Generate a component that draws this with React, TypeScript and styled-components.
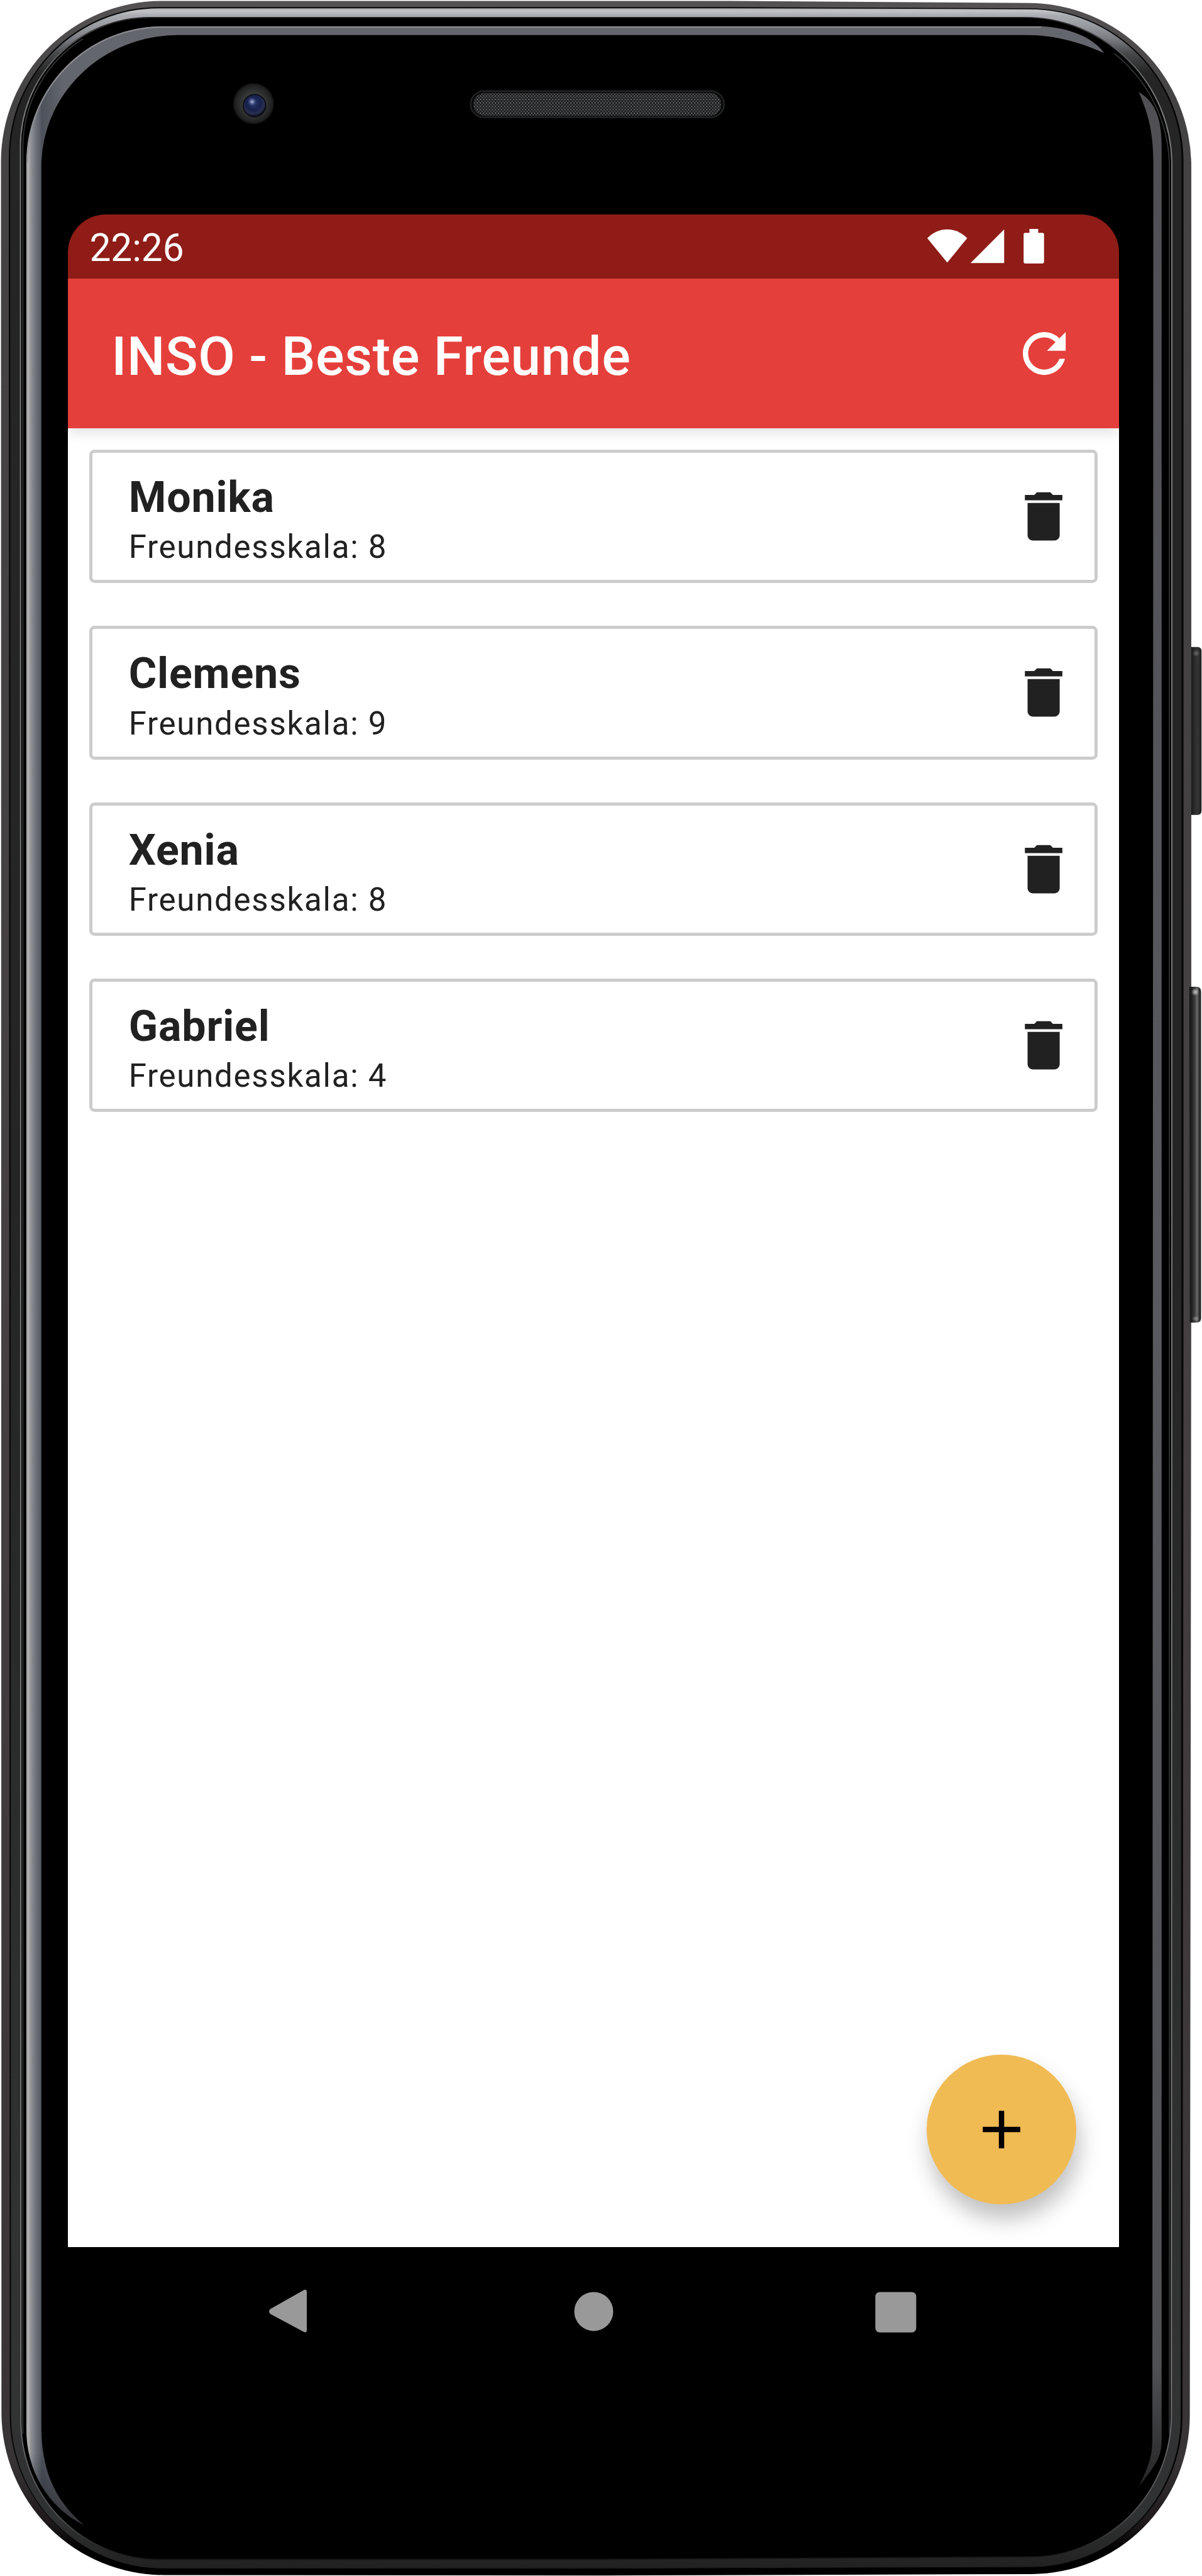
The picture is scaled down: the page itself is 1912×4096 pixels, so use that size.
import React from "react";
import styled, { createGlobalStyle } from "styled-components";

/* Device units to CSS pixels: the handset artwork is drawn on a 2470 x 5292 grid. */
const SCALE = 1912 / 2470;
const u = (n: number) => `${(n * SCALE).toFixed(3)}px`;

const GlobalStyle = createGlobalStyle`
  html, body { margin: 0; padding: 0; background: #fff; }
  body { font-family: Roboto, "Noto Sans", sans-serif; overflow: hidden; }
  *, *::before, *::after { box-sizing: border-box; }
  button { border: 0; padding: 0; background: none; font: inherit; color: inherit; }
`;

const Device = styled.div`
  position: relative;
  width: 1912px;
  height: 4096px;
  padding: ${u(440)} 0 0 ${u(140)};
  overflow: hidden;
`;

const Casing = styled.svg`
  position: absolute;
  inset: 0;
  width: 100%;
  height: 100%;
`;

const Screen = styled.div`
  position: relative;
  display: flex;
  flex-direction: column;
  width: ${u(2160)};
  height: ${u(4440)};
  border-radius: ${u(78)} ${u(78)} 0 0;
  overflow: hidden;
  background: #000;
`;

const StatusBar = styled.div`
  display: flex;
  flex: none;
  align-items: center;
  justify-content: space-between;
  height: ${u(132)};
  padding: 0 ${u(154)} 0 ${u(44)};
  background: #8f1c17;
  color: #fff;
`;

const Clock = styled.span`
  padding-top: ${u(7)};
  font-size: ${u(78)};
  line-height: ${u(100)};
`;

const StatusIcons = styled.svg`
  width: ${u(240)};
  height: ${u(72)};
  fill: #fff;
`;

const AppBar = styled.header`
  position: relative;
  z-index: 1;
  display: flex;
  flex: none;
  align-items: center;
  justify-content: space-between;
  height: ${u(308)};
  padding: 0 ${u(88)};
  background: #e53f3b;
  color: #fff;
  box-shadow: 0 ${u(10)} ${u(26)} rgba(0, 0, 0, 0.12);
`;

const Title = styled.h1`
  margin: 0;
  padding: ${u(13)} 0 0 ${u(1)};
  font-size: ${u(110)};
  font-weight: 500;
  line-height: ${u(140)};
  letter-spacing: ${u(0.83)};
`;

const Icon = styled.svg`
  display: block;
  width: ${u(132)};
  height: ${u(132)};
  fill: currentColor;
`;

const Content = styled.main`
  position: relative;
  flex: 1;
  padding: ${u(44)};
  background: #fff;
`;

const FriendList = styled.ul`
  display: flex;
  flex-direction: column;
  gap: ${u(88)};
  margin: 0;
  padding: 0;
  list-style: none;
`;

const FriendCard = styled.li`
  display: flex;
  align-items: center;
  justify-content: space-between;
  height: ${u(274)};
  padding: 0 ${u(39)} 0 ${u(74)};
  border: ${u(6.5)} solid #ccc;
  border-radius: ${u(11)};
  color: #212121;
`;

const FriendText = styled.div`
  display: flex;
  flex-direction: column;
  padding-top: ${u(16)};
`;

const FriendName = styled.strong`
  font-size: ${u(88)};
  font-weight: 700;
  line-height: ${u(110)};
  letter-spacing: ${u(1.1)};
`;

const FriendScale = styled.span`
  font-size: ${u(66)};
  line-height: ${u(92)};
  letter-spacing: ${u(2.2)};
`;

const AddButton = styled.button`
  position: absolute;
  right: ${u(88)};
  bottom: ${u(88)};
  display: grid;
  place-items: center;
  width: ${u(308)};
  height: ${u(308)};
  border-radius: 50%;
  background: #f1bb54;
  color: #000;
  box-shadow: ${u(6)} ${u(30)} ${u(46)} rgba(0, 0, 0, 0.25);
`;

const NavBar = styled.nav`
  display: flex;
  flex: none;
  align-items: center;
  justify-content: space-between;
  height: ${u(264)};
  padding: 0 ${u(397)};
  background: #000;
`;

const NavIcon = styled.svg`
  width: ${u(120)};
  height: ${u(120)};
  fill: #999;
`;

const friends = [
  { name: "Monika", scale: 8 },
  { name: "Clemens", scale: 9 },
  { name: "Xenia", scale: 8 },
  { name: "Gabriel", scale: 4 },
];

function PhoneCasing() {
  return (
    <Casing viewBox="0 0 2470 5292" preserveAspectRatio="none" aria-hidden="true">
      <defs>
        <linearGradient id="rim" x1="0" y1="0" x2="0" y2="5292" gradientUnits="userSpaceOnUse">
          <stop offset="0" stopColor="#545253" />
          <stop offset="0.04" stopColor="#454243" />
          <stop offset="0.5" stopColor="#454142" />
          <stop offset="0.955" stopColor="#383435" />
          <stop offset="0.98" stopColor="#1d191b" />
          <stop offset="0.99" stopColor="#000" />
        </linearGradient>
        <linearGradient id="metal" x1="0" y1="14" x2="0" y2="150" gradientUnits="userSpaceOnUse">
          <stop offset="0" stopColor="#98999c" />
          <stop offset="0.06" stopColor="#c3c4c8" />
          <stop offset="0.13" stopColor="#a9acb0" />
          <stop offset="0.3" stopColor="#96999d" />
          <stop offset="0.5" stopColor="#77797e" />
          <stop offset="0.7" stopColor="#48494b" />
          <stop offset="1" stopColor="#252525" />
        </linearGradient>
        <linearGradient id="metalLow" x1="0" y1="2600" x2="0" y2="5276" gradientUnits="userSpaceOnUse">
          <stop offset="0" stopColor="#323333" stopOpacity="0" />
          <stop offset="0.85" stopColor="#323333" />
          <stop offset="0.96" stopColor="#303132" />
          <stop offset="1" stopColor="#212121" />
        </linearGradient>
        <linearGradient id="edge" x1="0" y1="36" x2="0" y2="5258" gradientUnits="userSpaceOnUse">
          <stop offset="0" stopColor="#222" />
          <stop offset="0.012" stopColor="#55575a" />
          <stop offset="0.03" stopColor="#7a7b7c" />
          <stop offset="0.93" stopColor="#777879" />
          <stop offset="0.985" stopColor="#4a4b4c" />
          <stop offset="1" stopColor="#161616" />
        </linearGradient>
        <linearGradient id="glassLeft" x1="54" y1="0" x2="130" y2="0" gradientUnits="userSpaceOnUse">
          <stop offset="0" stopColor="#959697" />
          <stop offset="0.05" stopColor="#b1b2b3" />
          <stop offset="0.13" stopColor="#8e9194" />
          <stop offset="0.25" stopColor="#70747b" />
          <stop offset="0.36" stopColor="#5b606a" />
          <stop offset="0.42" stopColor="#4d515b" />
          <stop offset="0.7" stopColor="#575c63" />
          <stop offset="1" stopColor="#64666d" />
        </linearGradient>
        <linearGradient id="glassTip" x1="0" y1="5040" x2="0" y2="5190" gradientUnits="userSpaceOnUse">
          <stop offset="0" stopColor="#202126" stopOpacity="0" />
          <stop offset="1" stopColor="#202126" stopOpacity="0.8" />
        </linearGradient>
        <linearGradient id="glassRight" x1="0" y1="189" x2="0" y2="5109" gradientUnits="userSpaceOnUse">
          <stop offset="0" stopColor="#4f4f54" />
          <stop offset="0.5" stopColor="#595a5f" />
          <stop offset="0.95" stopColor="#505155" />
          <stop offset="1" stopColor="#252527" />
        </linearGradient>
        <linearGradient id="power" x1="2446" y1="0" x2="2469" y2="0" gradientUnits="userSpaceOnUse">
          <stop offset="0" stopColor="#131313" />
          <stop offset="0.35" stopColor="#2a2a2a" />
          <stop offset="0.65" stopColor="#353535" />
          <stop offset="0.9" stopColor="#252525" />
          <stop offset="1" stopColor="#111" />
        </linearGradient>
        <linearGradient id="volume" x1="2444" y1="0" x2="2468" y2="0" gradientUnits="userSpaceOnUse">
          <stop offset="0" stopColor="#131313" />
          <stop offset="0.3" stopColor="#292929" />
          <stop offset="0.55" stopColor="#4a4a4a" />
          <stop offset="0.65" stopColor="#6a6a6a" />
          <stop offset="0.82" stopColor="#3c3c3c" />
          <stop offset="1" stopColor="#0d0d0d" />
        </linearGradient>
        <radialGradient id="keyGlow">
          <stop offset="0" stopColor="#fff" stopOpacity="0.7" />
          <stop offset="1" stopColor="#fff" stopOpacity="0" />
        </radialGradient>
        <radialGradient id="lens" cx="0.45" cy="0.38" r="0.6">
          <stop offset="0" stopColor="#2a3970" />
          <stop offset="0.55" stopColor="#16204a" />
          <stop offset="0.8" stopColor="#2b3050" />
          <stop offset="1" stopColor="#0c0e1c" />
        </radialGradient>
        <radialGradient id="glint">
          <stop offset="0" stopColor="#b9c1dd" />
          <stop offset="1" stopColor="#4b5a90" stopOpacity="0" />
        </radialGradient>
        <radialGradient id="bezel">
          <stop offset="0.5" stopColor="#383a3a" />
          <stop offset="0.9" stopColor="#1f2020" />
          <stop offset="1" stopColor="#101010" />
        </radialGradient>
        <pattern id="mesh" width="6.2" height="7" patternUnits="userSpaceOnUse">
          <rect width="6.2" height="7" fill="#171819" />
          <rect x="0" y="0" width="2.8" height="2.8" fill="#6c6e6e" />
          <rect x="3.1" y="3.5" width="2.8" height="2.8" fill="#575959" />
        </pattern>
      </defs>

      <path fill="url(#power)" d="M2444 1329h17q8 0 8 9v327q0 9-8 9h-17z" />
      <ellipse cx="2458" cy="1342" rx="8" ry="7" fill="url(#keyGlow)" opacity="0.4" />
      <path
        fill="url(#rim)"
        d="M2 332A330 330 0 0 1 332 2H1500L2112 6A336 336 0 0 1 2448 342V2600L2445 4962A326 326 0 0 1 2119 5288L1235 5291L337 5290A334 334 0 0 1 3 4956z"
      />
      <path
        fill="#070707"
        d="M18 322A308 308 0 0 1 326 14.500H1500L2116 17A316 316 0 0 1 2432 336V2600L2430 4964A312 312 0 0 1 2118 5275L1235 5278L336 5277A316 316 0 0 1 20 4960z"
      />
      <path
        fill="url(#metal)"
        d="M21 322A305 305 0 0 1 326 17H1500L2116 19A312 312 0 0 1 2428 336V2600L2426 4964A308 308 0 0 1 2118 5273L1235 5276L336 5276A313 313 0 0 1 23 4960z"
      />
      <path
        fill="url(#metalLow)"
        d="M21 2600V322H2428V2600L2426 4964A308 308 0 0 1 2118 5273L1235 5276L336 5276A313 313 0 0 1 23 4960z"
      />
      <path
        fill="#000"
        stroke="url(#edge)"
        strokeWidth="2.500"
        d="M42 301A265 265 0 0 1 307 36H2106A302 302 0 0 1 2408 338V2600L2407 4963A290 290 0 0 1 2117 5253L1235 5258H326A283 283 0 0 1 43 4976z"
      />
      <path
        fill="none"
        stroke="#3a3b3c"
        strokeWidth="2"
        d="M47 5000V305A264 264 0 0 1 170 80M2290 110A300 300 0 0 1 2403 340V5000"
      />
      <path
        fill="url(#glassLeft)"
        d="M172 5187C98 5150 54 5075 54 4990V334A280 280 0 0 1 334 54H2139C2190 56 2244 74 2269 109C2222 88 2170 72 2110 72H366A281 270 0 0 0 85 340V4990C86 5065 106 5132 172 5187z"
      />
      <path
        fill="url(#glassTip)"
        d="M172 5187C98 5150 54 5075 54 4990H85C86 5065 106 5132 172 5187z"
      />
      <path fill="none" stroke="#8d8f93" strokeWidth="2.500" d="M56 334A278 278 0 0 1 334 55.500H2139" />
      <path
        fill="url(#glassRight)"
        d="M2340 189C2375 210 2387 245 2387 300V5010C2387 5050 2375 5062 2340 5109C2358 5070 2368 5050 2368 5010L2370 340C2370 275 2362 240 2340 189z"
      />
      <path fill="url(#volume)" d="M2444 2027h15q9 0 9 10v671q0 9-9 9h-14z" />
      <ellipse cx="2456" cy="2038" rx="8" ry="8" fill="url(#keyGlow)" />
      <ellipse cx="2457" cy="2709" rx="8" ry="6" fill="url(#keyGlow)" opacity="0.5" />

      <circle cx="521" cy="213" r="42" fill="url(#bezel)" />
      <circle cx="523" cy="217" r="23" fill="url(#lens)" stroke="#090a10" strokeWidth="2" />
      <circle cx="518" cy="209" r="9" fill="url(#glint)" />

      <rect x="967" y="187" width="521" height="54" rx="27" fill="#0a0a0b" stroke="#222324" strokeWidth="3" />
      <rect x="973" y="191" width="509" height="47" rx="23" fill="url(#mesh)" />
    </Casing>
  );
}

export default function App() {
  return (
    <>
      <GlobalStyle />
      <Device>
        <PhoneCasing />
        <Screen>
          <StatusBar>
            <Clock>22:26</Clock>
            <StatusIcons viewBox="1906 470 240 72">
              <path d="M1906 489Q1924 471 1947 471T1988 489L1947 539z" />
              <path d="M1995 540L2064 471V540z" />
              <path d="M2116 470h18v8h9q3 0 3 3v57q0 3-3 3h-36q-3 0-3-3v-57q0-3 3-3h9z" />
            </StatusIcons>
          </StatusBar>
          <AppBar>
            <Title>INSO - Beste Freunde</Title>
            <button type="button" aria-label="Aktualisieren">
              <Icon viewBox="0 0 24 24">
                <path d="M17.650 6.350C16.200 4.900 14.210 4 12 4c-4.420 0-7.990 3.580-7.990 8s3.570 8 7.990 8c3.730 0 6.840-2.550 7.730-6h-2.080c-.820 2.330-3.040 4-5.650 4-3.310 0-6-2.690-6-6s2.690-6 6-6c1.660 0 3.140.690 4.220 1.780L13 11h7V4l-2.350 2.350z" />
              </Icon>
            </button>
          </AppBar>
          <Content>
            <FriendList>
              {friends.map((friend) => (
                <FriendCard key={friend.name}>
                  <FriendText>
                    <FriendName>{friend.name}</FriendName>
                    <FriendScale>Freundesskala: {friend.scale}</FriendScale>
                  </FriendText>
                  <button type="button" aria-label="Entfernen">
                    <Icon viewBox="0 0 24 24">
                      <path d="M6 19c0 1.100.900 2 2 2h8c1.100 0 2-.900 2-2V7H6v12zM19 4h-3.500l-1-1h-5l-1 1H5v2h14V4z" />
                    </Icon>
                  </button>
                </FriendCard>
              ))}
            </FriendList>
            <AddButton type="button" aria-label="Neu">
              <Icon viewBox="0 0 24 24">
                <path d="M19 13h-6v6h-2v-6H5v-2h6V5h2v6h6v2z" />
              </Icon>
            </AddButton>
          </Content>
          <NavBar>
            <NavIcon viewBox="0 0 120 120">
              <path d="M18 55L86 16.500Q93 13 93 20V98Q93 105 86 101.500L18 65Q13 60 18 55z" />
            </NavIcon>
            <NavIcon viewBox="0 0 120 120">
              <circle cx="60" cy="60" r="40" />
            </NavIcon>
            <NavIcon viewBox="0 0 120 120">
              <rect x="16" y="20" width="84" height="83" rx="9" />
            </NavIcon>
          </NavBar>
        </Screen>
      </Device>
    </>
  );
}
